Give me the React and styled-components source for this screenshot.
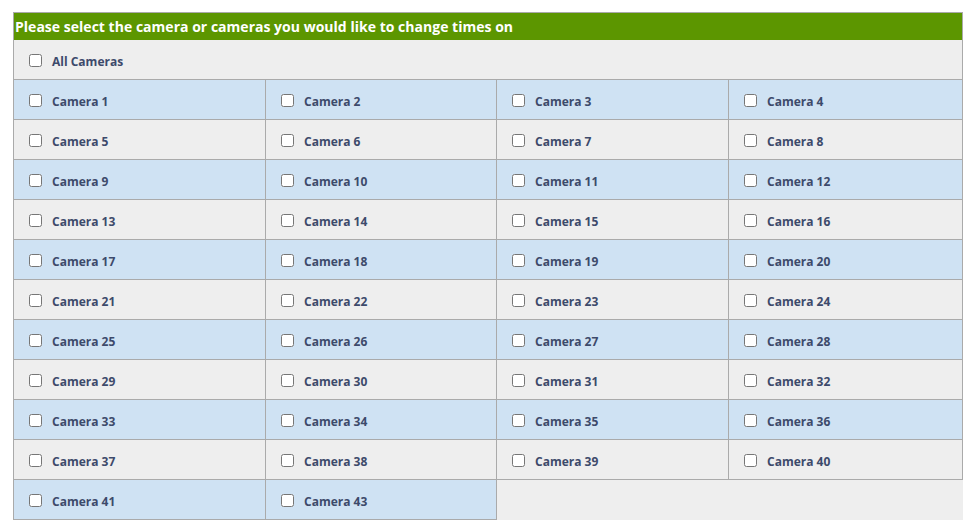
import React, { useState } from "react";
import styled, { createGlobalStyle } from "styled-components";

const cameraIds = [
  1, 2, 3, 4, 5, 6, 7, 8, 9, 10, 11, 12, 13, 14, 15, 16, 17, 18, 19, 20,
  21, 22, 23, 24, 25, 26, 27, 28, 29, 30, 31, 32, 33, 34, 35, 36, 37, 38,
  39, 40, 41, 43,
];

const GlobalStyle = createGlobalStyle`
  html, body {
    margin: 0;
    padding: 0;
    background: #ffffff;
  }
`;

const Page = styled.div`
  padding: 12px 13px;
  font-family: "Open Sans", "Noto Sans", sans-serif;
`;

const Panel = styled.div`
  width: 950px;
  box-sizing: border-box;
  background-color: #eeeeee;
`;

const Header = styled.div`
  height: 28px;
  box-sizing: border-box;
  border: 1px solid #aaaaaa;
  border-bottom: none;
  background-color: #5c9600;
  color: #ffffff;
  font-weight: 700;
  font-size: 14px;
  line-height: 27px;
  padding-left: 1px;
  letter-spacing: 0.02px;
`;

const AllRow = styled.div`
  height: 40px;
  box-sizing: border-box;
  border: 1px solid #aaaaaa;
  border-top: none;
  display: flex;
  align-items: center;
  padding-left: 11px;
`;

const Grid = styled.div`
  display: grid;
  grid-template-columns: 252px 231px 232px 234px;
  grid-auto-rows: 40px;
  border-left: 1px solid #aaaaaa;
`;

const Cell = styled.label`
  box-sizing: border-box;
  display: flex;
  align-items: center;
  padding-left: 11px;
  border-right: 1px solid #aaaaaa;
  border-bottom: 1px solid #aaaaaa;
  background-color: ${(p) => (p.$shaded ? "#cfe2f3" : "#eeeeee")};
`;

const Box = styled.input`
  width: 13px;
  height: 13px;
  margin: 2px 10px 0 4px;
`;

const Label = styled.span`
  color: #3d4a6b;
  font-weight: 700;
  font-size: 12px;
  margin-top: 4px;
`;

const App = () => {
  const [checked, setChecked] = useState({});

  const toggle = (id) => {
    setChecked((prev) => ({ ...prev, [id]: !prev[id] }));
  };

  return (
    <Page>
      <GlobalStyle />
      <Panel>
        <Header>Please select the camera or cameras you would like to change times on</Header>
        <AllRow as="label">
          <Box type="checkbox" checked={!!checked.all} onChange={() => toggle("all")} />
          <Label>All Cameras</Label>
        </AllRow>
        <Grid>
          {cameraIds.map((id, i) => (
            <Cell key={id} $shaded={Math.floor(i / 4) % 2 === 0}>
              <Box type="checkbox" checked={!!checked[id]} onChange={() => toggle(id)} />
              <Label>Camera {id}</Label>
            </Cell>
          ))}
        </Grid>
      </Panel>
    </Page>
  );
};

export default App;
